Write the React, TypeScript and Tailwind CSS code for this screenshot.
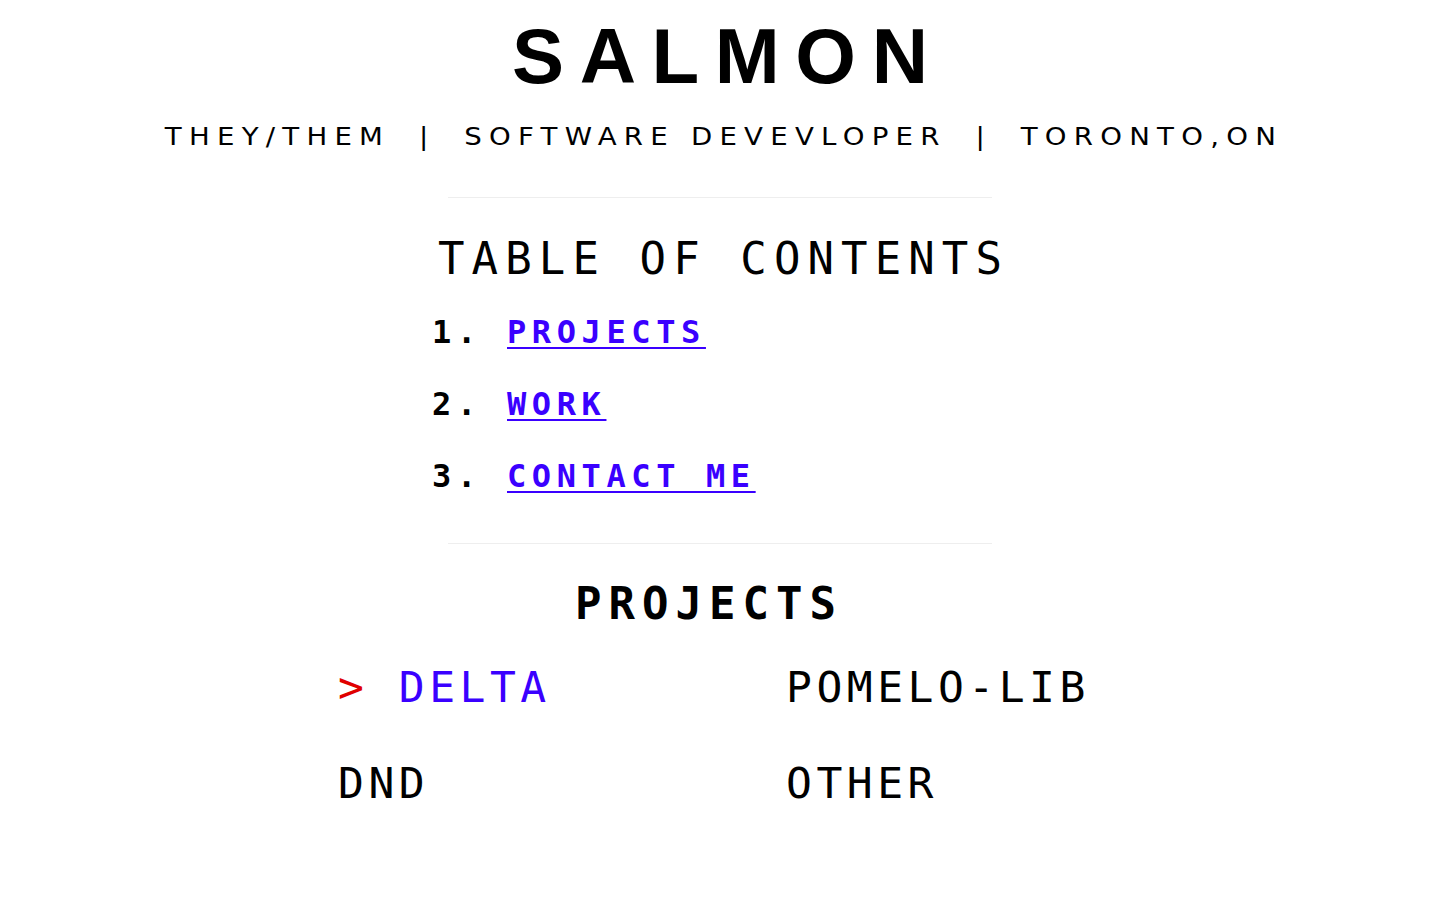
export default function App() {
  const mono = { fontFamily: '"DejaVu Sans Mono", "Liberation Mono", monospace' };
  return (
    <div className="min-h-[900px] bg-white text-black">
      <div className="flex flex-col items-center">
        <h1
          className="mt-[17px] text-[78px] leading-none font-bold tracking-[0.2em] pl-[0.2em]"
          style={{ fontFamily: '"Liberation Sans", Arial, sans-serif' }}
        >
          SALMON
        </h1>
        <p
          className="mt-[30px] text-[24px] leading-none tracking-[6.3px] pl-[6.3px] whitespace-pre scale-x-[1.15] flex"
          style={{ fontFamily: '"DejaVu Sans", "Liberation Sans", sans-serif' }}
        >
          <span>THEY/THEM</span>
          <span className="mx-[25px]">|</span>
          <span>SOFTWARE DEVEVLOPER</span>
          <span className="mx-[25px]">|</span>
          <span>TORONTO,ON</span>
        </p>
        <hr className="mt-[48px] w-[544px] border-0 border-t border-[#eeeeee]" />
        <h2 className="mt-[39px] text-[44px] leading-none tracking-[7.1px] pl-[7.1px]" style={mono}>
          TABLE OF CONTENTS
        </h2>
        <ol className="mt-[35px] w-[576px] flex flex-col gap-[40px] text-[32px] leading-none font-bold tracking-[5.6px]" style={mono}>
          {['PROJECTS', 'WORK', 'CONTACT ME'].map((t, i) => (
            <li key={t} className="flex">
              <span className="w-[75px]">{i + 1}.</span>
              <a href="#" className="text-[#3a00ff] underline underline-offset-[4px] decoration-2">
                {t}
              </a>
            </li>
          ))}
        </ol>
        <hr className="mt-[51px] w-[544px] border-0 border-t border-[#eeeeee]" />
        <h2 className="mt-[38px] text-[44px] leading-none font-bold tracking-[7px] pr-[22px]" style={mono}>
          PROJECTS
        </h2>
        <div className="mt-[40px] w-[764px] grid grid-cols-2 gap-x-[132px] gap-y-[53px] text-[43px] leading-none tracking-[4.5px]" style={mono}>
          <div className="whitespace-pre">
            <span className="text-[#e00000]">&gt; </span>
            <span className="text-[#3a00ff]">DELTA</span>
          </div>
          <div>POMELO-LIB</div>
          <div>DND</div>
          <div>OTHER</div>
        </div>
      </div>
    </div>
  );
}
